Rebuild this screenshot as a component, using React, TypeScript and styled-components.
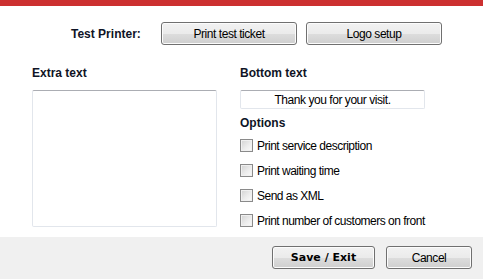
import React from 'react';
import styled, { createGlobalStyle } from 'styled-components';

const GlobalStyle = createGlobalStyle`
  html, body {
    margin: 0;
    padding: 0;
    background: #ffffff;
  }
  body {
    font-family: "Liberation Sans", Arial, sans-serif;
    font-size: 12px;
    color: #000;
  }
`;

const options = [
  'Print service description',
  'Print waiting time',
  'Send as XML',
  'Print number of customers on front',
];

const Window = styled.div`
  width: 483px;
  height: 279px;
  display: flex;
  flex-direction: column;
  background: #ffffff;
  overflow: hidden;
`;

const RedBar = styled.div`
  height: 6px;
  background: #cc3030;
`;

const Main = styled.div`
  flex: 1;
  display: flex;
  flex-direction: column;
`;

const PrinterRow = styled.div`
  display: flex;
  align-items: center;
  gap: 9px;
  margin-top: 16px;
  padding-left: 71px;
`;

const RowLabel = styled.span`
  font-weight: bold;
  color: #0f1426;
  width: 81px;
`;

const Button = styled.button<{ $w: number; $bold?: boolean }>`
  box-sizing: border-box;
  width: ${(p) => p.$w}px;
  height: 23px;
  padding: 0;
  border: 1px solid #707070;
  border-radius: 3px;
  background: linear-gradient(#f2f2f2 0%, #ebebeb 50%, #dddddd 51%, #cfcfcf 100%);
  font-family: ${(p) =>
    p.$bold ? '"DejaVu Sans", Verdana, sans-serif' : '"Liberation Sans", Arial, sans-serif'};
  font-size: ${(p) => (p.$bold ? 11 : 12)}px;
  font-weight: ${(p) => (p.$bold ? 'bold' : 'normal')};
  letter-spacing: ${(p) => (p.$bold ? 0 : -0.45)}px;
  color: #000;
  box-shadow: inset 0 0 0 1px #fcfcfc;
`;

const Columns = styled.div`
  display: flex;
  margin-top: 21px;
  padding-left: 32px;
`;

const LeftCol = styled.div`
  width: 185px;
  display: flex;
  flex-direction: column;
  margin-right: 23px;
`;

const RightCol = styled.div`
  flex: 1;
  display: flex;
  flex-direction: column;
`;

const SectionLabel = styled.div<{ $gap?: number }>`
  font-weight: bold;
  color: #0f1426;
  line-height: 14px;
  margin-top: ${(p) => p.$gap ?? 0}px;
`;

const TextArea = styled.div`
  box-sizing: border-box;
  margin-top: 10px;
  width: 185px;
  height: 137px;
  border: 1px solid #e2e6ec;
  border-top-color: #abadb3;
  border-radius: 2px;
  background: #fff;
`;

const TextInput = styled.div`
  box-sizing: border-box;
  margin-top: 10px;
  width: 185px;
  height: 19px;
  border: 1px solid #e2e6ec;
  border-top-color: #abadb3;
  border-radius: 2px;
  display: flex;
  align-items: center;
  justify-content: center;
  letter-spacing: -0.45px;
`;

const OptionList = styled.div`
  display: flex;
  flex-direction: column;
  gap: 12px;
  margin-top: 9px;
`;

const OptionRow = styled.label`
  display: flex;
  align-items: center;
  height: 13px;
  gap: 4px;
  white-space: nowrap;
  letter-spacing: -0.5px;
`;

const CheckBox = styled.span`
  box-sizing: border-box;
  flex: none;
  width: 13px;
  height: 13px;
  border: 1px solid #8a8a8a;
  background: linear-gradient(135deg, #d2d2d2 0%, #ececec 55%, #fbfbfb 100%);
  box-shadow: inset 0 0 0 1px #f0f0f0;
`;

const Footer = styled.div`
  height: 42px;
  background: #f0f0f0;
  display: flex;
  justify-content: flex-end;
  align-items: flex-start;
  gap: 11px;
  padding: 9px 11px 0 0;
  box-sizing: border-box;
`;

export default function App() {
  return (
    <>
      <GlobalStyle />
      <Window>
        <RedBar />
        <Main>
          <PrinterRow>
            <RowLabel>Test Printer:</RowLabel>
            <Button $w={136}>Print test ticket</Button>
            <Button $w={136}>Logo setup</Button>
          </PrinterRow>
          <Columns>
            <LeftCol>
              <SectionLabel>Extra text</SectionLabel>
              <TextArea />
            </LeftCol>
            <RightCol>
              <SectionLabel>Bottom text</SectionLabel>
              <TextInput>Thank you for your visit.</TextInput>
              <SectionLabel $gap={7}>Options</SectionLabel>
              <OptionList>
                {options.map((o) => (
                  <OptionRow key={o}>
                    <CheckBox />
                    {o}
                  </OptionRow>
                ))}
              </OptionList>
            </RightCol>
          </Columns>
        </Main>
        <Footer>
          <Button $w={103} $bold>
            Save / Exit
          </Button>
          <Button $w={86}>Cancel</Button>
        </Footer>
      </Window>
    </>
  );
}
